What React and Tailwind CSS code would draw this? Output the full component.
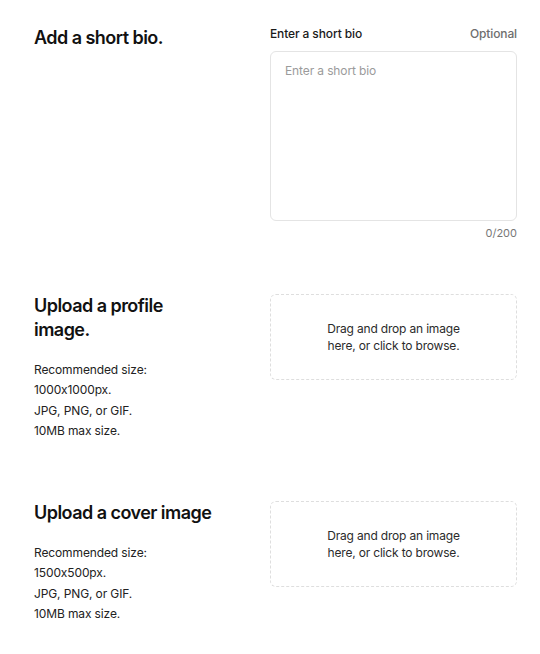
const SPECS = {
  profile: ["Recommended size:", "1000x1000px.", "JPG, PNG, or GIF.", "10MB max size."],
  cover: ["Recommended size:", "1500x500px.", "JPG, PNG, or GIF.", "10MB max size."],
};

function DropZone() {
  return (
    <div className="h-[86px] rounded-md border border-dashed border-[#dedede] flex items-center justify-center text-center text-[12px] leading-[17px] tracking-[-0.015em] text-[#2b2b2b] cursor-pointer">
      <p>
        Drag and drop an image
        <br />
        here, or click to browse.
      </p>
    </div>
  );
}

function UploadSection({ title, specs, className }) {
  return (
    <section className={`grid grid-cols-[184px_247px] gap-x-[52px] ${className}`}>
      <div>
        <h2 className="text-[18px] leading-6 font-semibold tracking-[-0.03em] text-[#111]">{title}</h2>
        <div className="mt-[18px] text-[12px] leading-[20.3px] tracking-[-0.01em] text-[#222]">
          {specs.map((line) => (
            <p key={line}>{line}</p>
          ))}
        </div>
      </div>
      <DropZone />
    </section>
  );
}

export default function App() {
  return (
    <div className="min-h-screen bg-white pl-[34px] pt-[26px] font-['Inter',sans-serif] [font-feature-settings:'calt'_0]">
      <section className="grid grid-cols-[184px_247px] gap-x-[52px]">
        <h2 className="text-[18px] leading-6 font-semibold tracking-[-0.03em] text-[#111]">Add a short bio.</h2>
        <div>
          <div className="flex items-center justify-between text-[12px] leading-4 tracking-[-0.01em]">
            <label className="font-medium text-[#1a1a1a]">Enter a short bio</label>
            <span className="font-medium text-[#6e6e6e]">Optional</span>
          </div>
          <textarea
            placeholder="Enter a short bio"
            className="mt-[9px] block w-full h-[170px] resize-none rounded-md border border-[#e4e4e4] px-[14px] py-[11px] text-[12px] leading-4 tracking-[-0.01em] text-[#222] placeholder:text-[#9b9b9b] outline-none"
          />
          <p className="mt-[5px] text-right text-[11px] leading-[14px] text-[#777]">0/200</p>
        </div>
      </section>
      <UploadSection title="Upload a profile image." specs={SPECS.profile} className="mt-[54px]" />
      <UploadSection title="Upload a cover image" specs={SPECS.cover} className="mt-[60px]" />
    </div>
  );
}
